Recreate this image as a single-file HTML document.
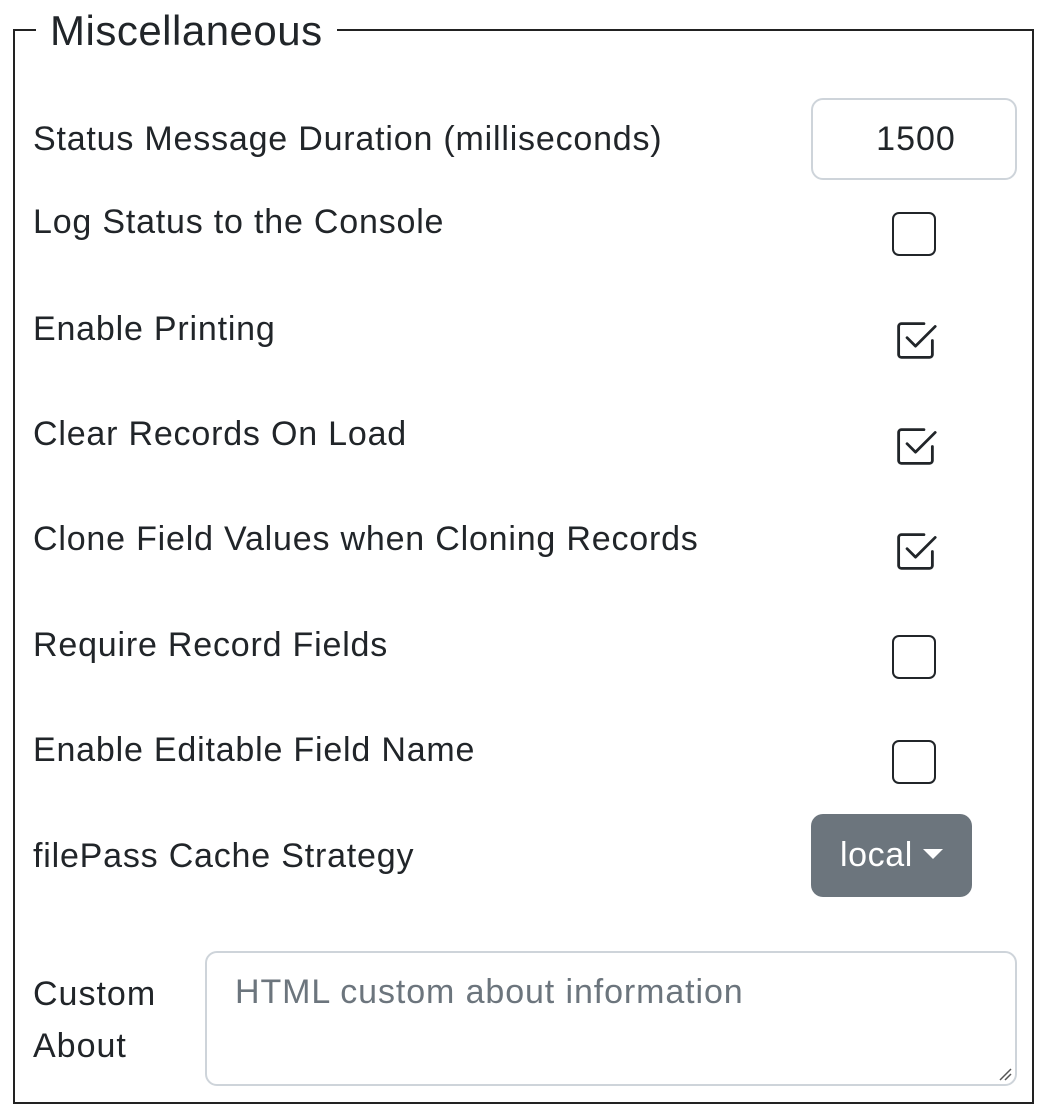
<!DOCTYPE html>
<html><head><meta charset="utf-8"><style>
body{margin:0;width:1048px;height:1106px;background:#fff;font-family:"Liberation Sans",Arial,sans-serif;color:#212529;position:relative;overflow:hidden}
.fs{position:absolute;left:13px;top:29px;width:1021px;height:1075px;border:2px solid #222;box-sizing:border-box}
.lg{position:absolute;left:36px;top:6px;padding:0 14px;background:#fff;font-size:42px;line-height:50px;color:#212529;letter-spacing:0.5px}
.l{position:absolute;left:33px;font-size:34px;line-height:40px;white-space:nowrap;letter-spacing:0.8px}
.cb{position:absolute;left:892px;width:44px;height:44px;border:2px solid #212529;border-radius:7px;box-sizing:border-box}
.ck{position:absolute;left:893px;width:45px;height:45px}
</style></head><body>
<div class="fs"></div>
<div class="lg">Miscellaneous</div>
<div class="l" style="top:119px">Status Message Duration (milliseconds)</div>
<div style="position:absolute;left:811px;top:98px;width:206px;height:82px;border:2px solid #ced4da;border-radius:12px;box-sizing:border-box;font-size:34px;line-height:78px;text-align:center;padding-left:4px;letter-spacing:1px">1500</div>
<div class="l" style="top:202px">Log Status to the Console</div>
<div class="cb" style="top:212px"></div>
<div class="l" style="top:309px">Enable Printing</div>
<svg class="ck" style="top:318px" viewBox="0 0 16 16" fill="#212529"><path d="M3 14.5A1.5 1.5 0 0 1 1.5 13V3A1.5 1.5 0 0 1 3 1.5h8a.5.5 0 0 1 0 1H3a.5.5 0 0 0-.5.5v10a.5.5 0 0 0 .5.5h10a.5.5 0 0 0 .5-.5V8a.5.5 0 0 1 1 0v5a1.5 1.5 0 0 1-1.5 1.5z"/><path d="m8.354 10.354 7-7a.5.5 0 0 0-.708-.708L8 9.293 5.354 6.646a.5.5 0 1 0-.708.708l3 3a.5.5 0 0 0 .708 0"/></svg>
<div class="l" style="top:414px">Clear Records On Load</div>
<svg class="ck" style="top:424px" viewBox="0 0 16 16" fill="#212529"><path d="M3 14.5A1.5 1.5 0 0 1 1.5 13V3A1.5 1.5 0 0 1 3 1.5h8a.5.5 0 0 1 0 1H3a.5.5 0 0 0-.5.5v10a.5.5 0 0 0 .5.5h10a.5.5 0 0 0 .5-.5V8a.5.5 0 0 1 1 0v5a1.5 1.5 0 0 1-1.5 1.5z"/><path d="m8.354 10.354 7-7a.5.5 0 0 0-.708-.708L8 9.293 5.354 6.646a.5.5 0 1 0-.708.708l3 3a.5.5 0 0 0 .708 0"/></svg>
<div class="l" style="top:519px">Clone Field Values when Cloning Records</div>
<svg class="ck" style="top:529px" viewBox="0 0 16 16" fill="#212529"><path d="M3 14.5A1.5 1.5 0 0 1 1.5 13V3A1.5 1.5 0 0 1 3 1.5h8a.5.5 0 0 1 0 1H3a.5.5 0 0 0-.5.5v10a.5.5 0 0 0 .5.5h10a.5.5 0 0 0 .5-.5V8a.5.5 0 0 1 1 0v5a1.5 1.5 0 0 1-1.5 1.5z"/><path d="m8.354 10.354 7-7a.5.5 0 0 0-.708-.708L8 9.293 5.354 6.646a.5.5 0 1 0-.708.708l3 3a.5.5 0 0 0 .708 0"/></svg>
<div class="l" style="top:625px">Require Record Fields</div>
<div class="cb" style="top:635px"></div>
<div class="l" style="top:730px">Enable Editable Field Name</div>
<div class="cb" style="top:740px"></div>
<div class="l" style="top:836px">filePass Cache Strategy</div>
<div style="position:absolute;left:811px;top:814px;width:161px;height:83px;background:#6c757d;border-radius:12px;color:#fff;font-size:34px;line-height:83px;text-align:left;box-sizing:border-box;padding-left:29px;letter-spacing:0.6px">local<span style="display:inline-block;width:0;height:0;border-left:10px solid transparent;border-right:10px solid transparent;border-top:10px solid #fff;vertical-align:middle;margin-left:10px;position:relative;top:-3px"></span></div>
<div class="l" style="top:968px;line-height:52px;letter-spacing:1px">Custom<br>About</div>
<div style="position:absolute;left:205px;top:951px;width:812px;height:135px;border:2px solid #ced4da;border-radius:12px;box-sizing:border-box;font-size:34px;color:#6c757d;padding:20px 0 0 28px;letter-spacing:0.9px">HTML custom about information
<svg style="position:absolute;right:3px;bottom:3px" width="14" height="14" viewBox="0 0 14 14" stroke="#555" stroke-width="1.5"><path d="M2 13L13 2M7 13L13 7"/></svg></div>
</body></html>
